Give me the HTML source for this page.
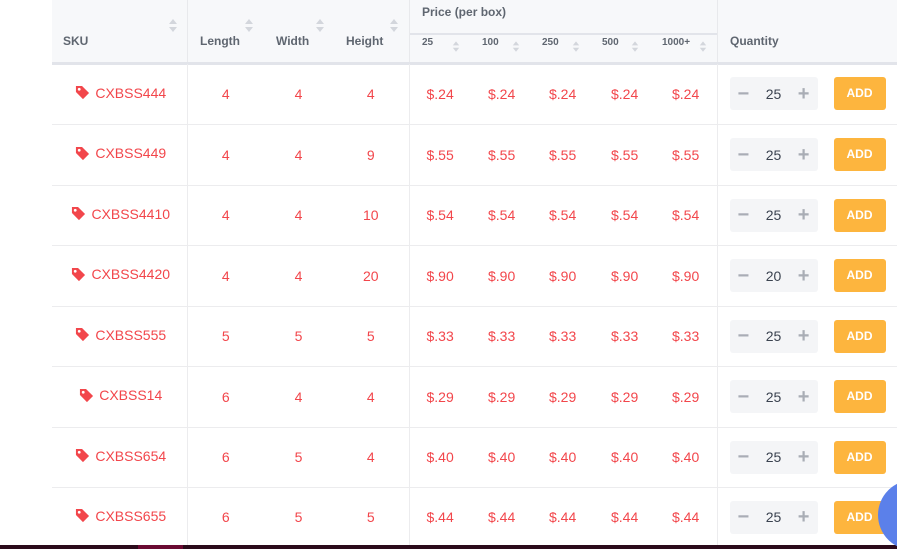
<!DOCTYPE html>
<html><head><meta charset="utf-8"><style>
*{margin:0;padding:0;box-sizing:border-box}
body{width:897px;height:549px;overflow:hidden;background:#fff;font-family:"Liberation Sans",Arial,sans-serif;position:relative}
.hd{position:absolute;left:52px;top:0;width:845px;height:62px;background:#f7f8fa}
.hb{position:absolute;left:52px;top:62px;width:845px;height:3px;background:#e2e4ea}
.vl{position:absolute;width:1px;background:#e8e9ec}
.ht{position:absolute;font-size:12px;font-weight:bold;color:#5f6670}
.st{position:absolute;font-size:11px;font-weight:bold;color:#5f6670}
.ar{position:absolute;width:8px;height:14px}
.ar:before{content:"";position:absolute;left:0;top:0;border-left:4px solid transparent;border-right:4px solid transparent;border-bottom:5px solid #d3d6dc}
.ar:after{content:"";position:absolute;left:0;top:8px;border-left:4px solid transparent;border-right:4px solid transparent;border-top:5px solid #d3d6dc}
.ar.s{transform:scale(.8)}
table{position:absolute;left:52px;top:64px;width:845px;border-collapse:collapse;table-layout:fixed}
td{border-bottom:1px solid #ececee;color:#f2464b;font-size:14px;text-align:center;padding:0}
td.b{border-right:1px solid #ececee}
td.p{text-align:left;padding-left:17px}
.sku{display:inline-flex;align-items:center;gap:5px;margin-left:3px}
.q{display:inline-flex;align-items:center;justify-content:space-between;width:88px;height:33px;background:#f4f5f7;border-radius:3px;padding:0 8px;color:#3b4350;font-size:14px;vertical-align:middle}
.q i{font-style:normal;color:#a9adb5;font-size:20px;font-weight:bold;line-height:1}
.add{display:inline-block;width:52px;height:33px;line-height:33px;background:#fdb53e;color:#fff;font-weight:bold;font-size:12px;border-radius:3px;text-align:center;vertical-align:middle;margin-left:16px}
</style></head><body>
<div class="hd"></div>
<div class="hb"></div>
<div class="vl" style="left:187px;top:0;height:62px"></div>
<div class="vl" style="left:409px;top:0;height:62px"></div>
<div class="vl" style="left:717px;top:0;height:62px"></div>
<div style="position:absolute;left:410px;top:33px;width:307px;height:2px;background:#e2e4ea"></div>
<div class="ht" style="left:63px;top:34px">SKU</div>
<div class="ht" style="left:200px;top:34px">Length</div>
<div class="ht" style="left:276px;top:34px">Width</div>
<div class="ht" style="left:346px;top:34px">Height</div>
<div class="ht" style="left:422px;top:5px">Price (per box)</div>
<div class="ht" style="left:730px;top:34px">Quantity</div>
<div class="ar" style="left:169px;top:19px"></div>
<div class="ar" style="left:245px;top:19px"></div>
<div class="ar" style="left:316px;top:19px"></div>
<div class="ar" style="left:390px;top:19px"></div>
<div class="st" style="left:422px;top:37px;font-size:10px">25</div>
<div class="st" style="left:482px;top:37px;font-size:10px">100</div>
<div class="st" style="left:542px;top:37px;font-size:10px">250</div>
<div class="st" style="left:602px;top:37px;font-size:10px">500</div>
<div class="st" style="left:662px;top:37px;font-size:10px">1000+</div>
<div class="ar s" style="left:452px;top:40px"></div>
<div class="ar s" style="left:512px;top:40px"></div>
<div class="ar s" style="left:572px;top:40px"></div>
<div class="ar s" style="left:631px;top:40px"></div>
<div class="ar s" style="left:699px;top:40px"></div>
<table>
<colgroup><col style="width:135px"><col style="width:73px"><col style="width:73px"><col style="width:76px"><col style="width:62px"><col style="width:61px"><col style="width:62px"><col style="width:61px"><col style="width:62px"><col style="width:180px"></colgroup>
<tbody id="tb"></tbody>
</table>
<div style="position:absolute;left:0;top:545px;width:897px;height:4px;background:#2b0b1b"></div>
<div style="position:absolute;left:138px;top:545px;width:45px;height:4px;background:#6a0a32"></div>
<div style="position:absolute;left:878px;top:480px;width:70px;height:70px;border-radius:50%;background:#5b80ea"></div>
<script>
var rows=[["CXBSS444",4,4,4,".24",25],["CXBSS449",4,4,9,".55",25],["CXBSS4410",4,4,10,".54",25],["CXBSS4420",4,4,20,".90",20],["CXBSS555",5,5,5,".33",25],["CXBSS14",6,4,4,".29",25],["CXBSS654",6,5,4,".40",25],["CXBSS655",6,5,5,".44",25]];
var hs=[60,61,60,61,60,61,60,60];
var tag='<svg width="15" height="15" viewBox="0 0 16 16"><path d="M1 1h6.5l7.5 7.5-6.5 6.5L1 7.5z" fill="#f2464b"/><circle cx="4.5" cy="4.5" r="1.5" fill="#fff"/></svg>';
var h='';
rows.forEach(function(r,i){
h+='<tr style="height:'+hs[i]+'px"><td class="b"><span class="sku">'+tag+r[0]+'</span></td><td style="padding-left:4px">'+r[1]+'</td><td style="padding-left:4px">'+r[2]+'</td><td class="b">'+r[3]+'</td>';
for(var k=0;k<5;k++)h+='<td class="p'+(k==4?' b':'')+'">$'+r[4]+'</td>';
h+='<td style="text-align:left;padding-left:12px"><span class="q"><i>−</i>'+r[5]+'<i>+</i></span><span class="add">ADD</span></td></tr>';
});
document.getElementById('tb').innerHTML=h;
</script>
</body></html>
